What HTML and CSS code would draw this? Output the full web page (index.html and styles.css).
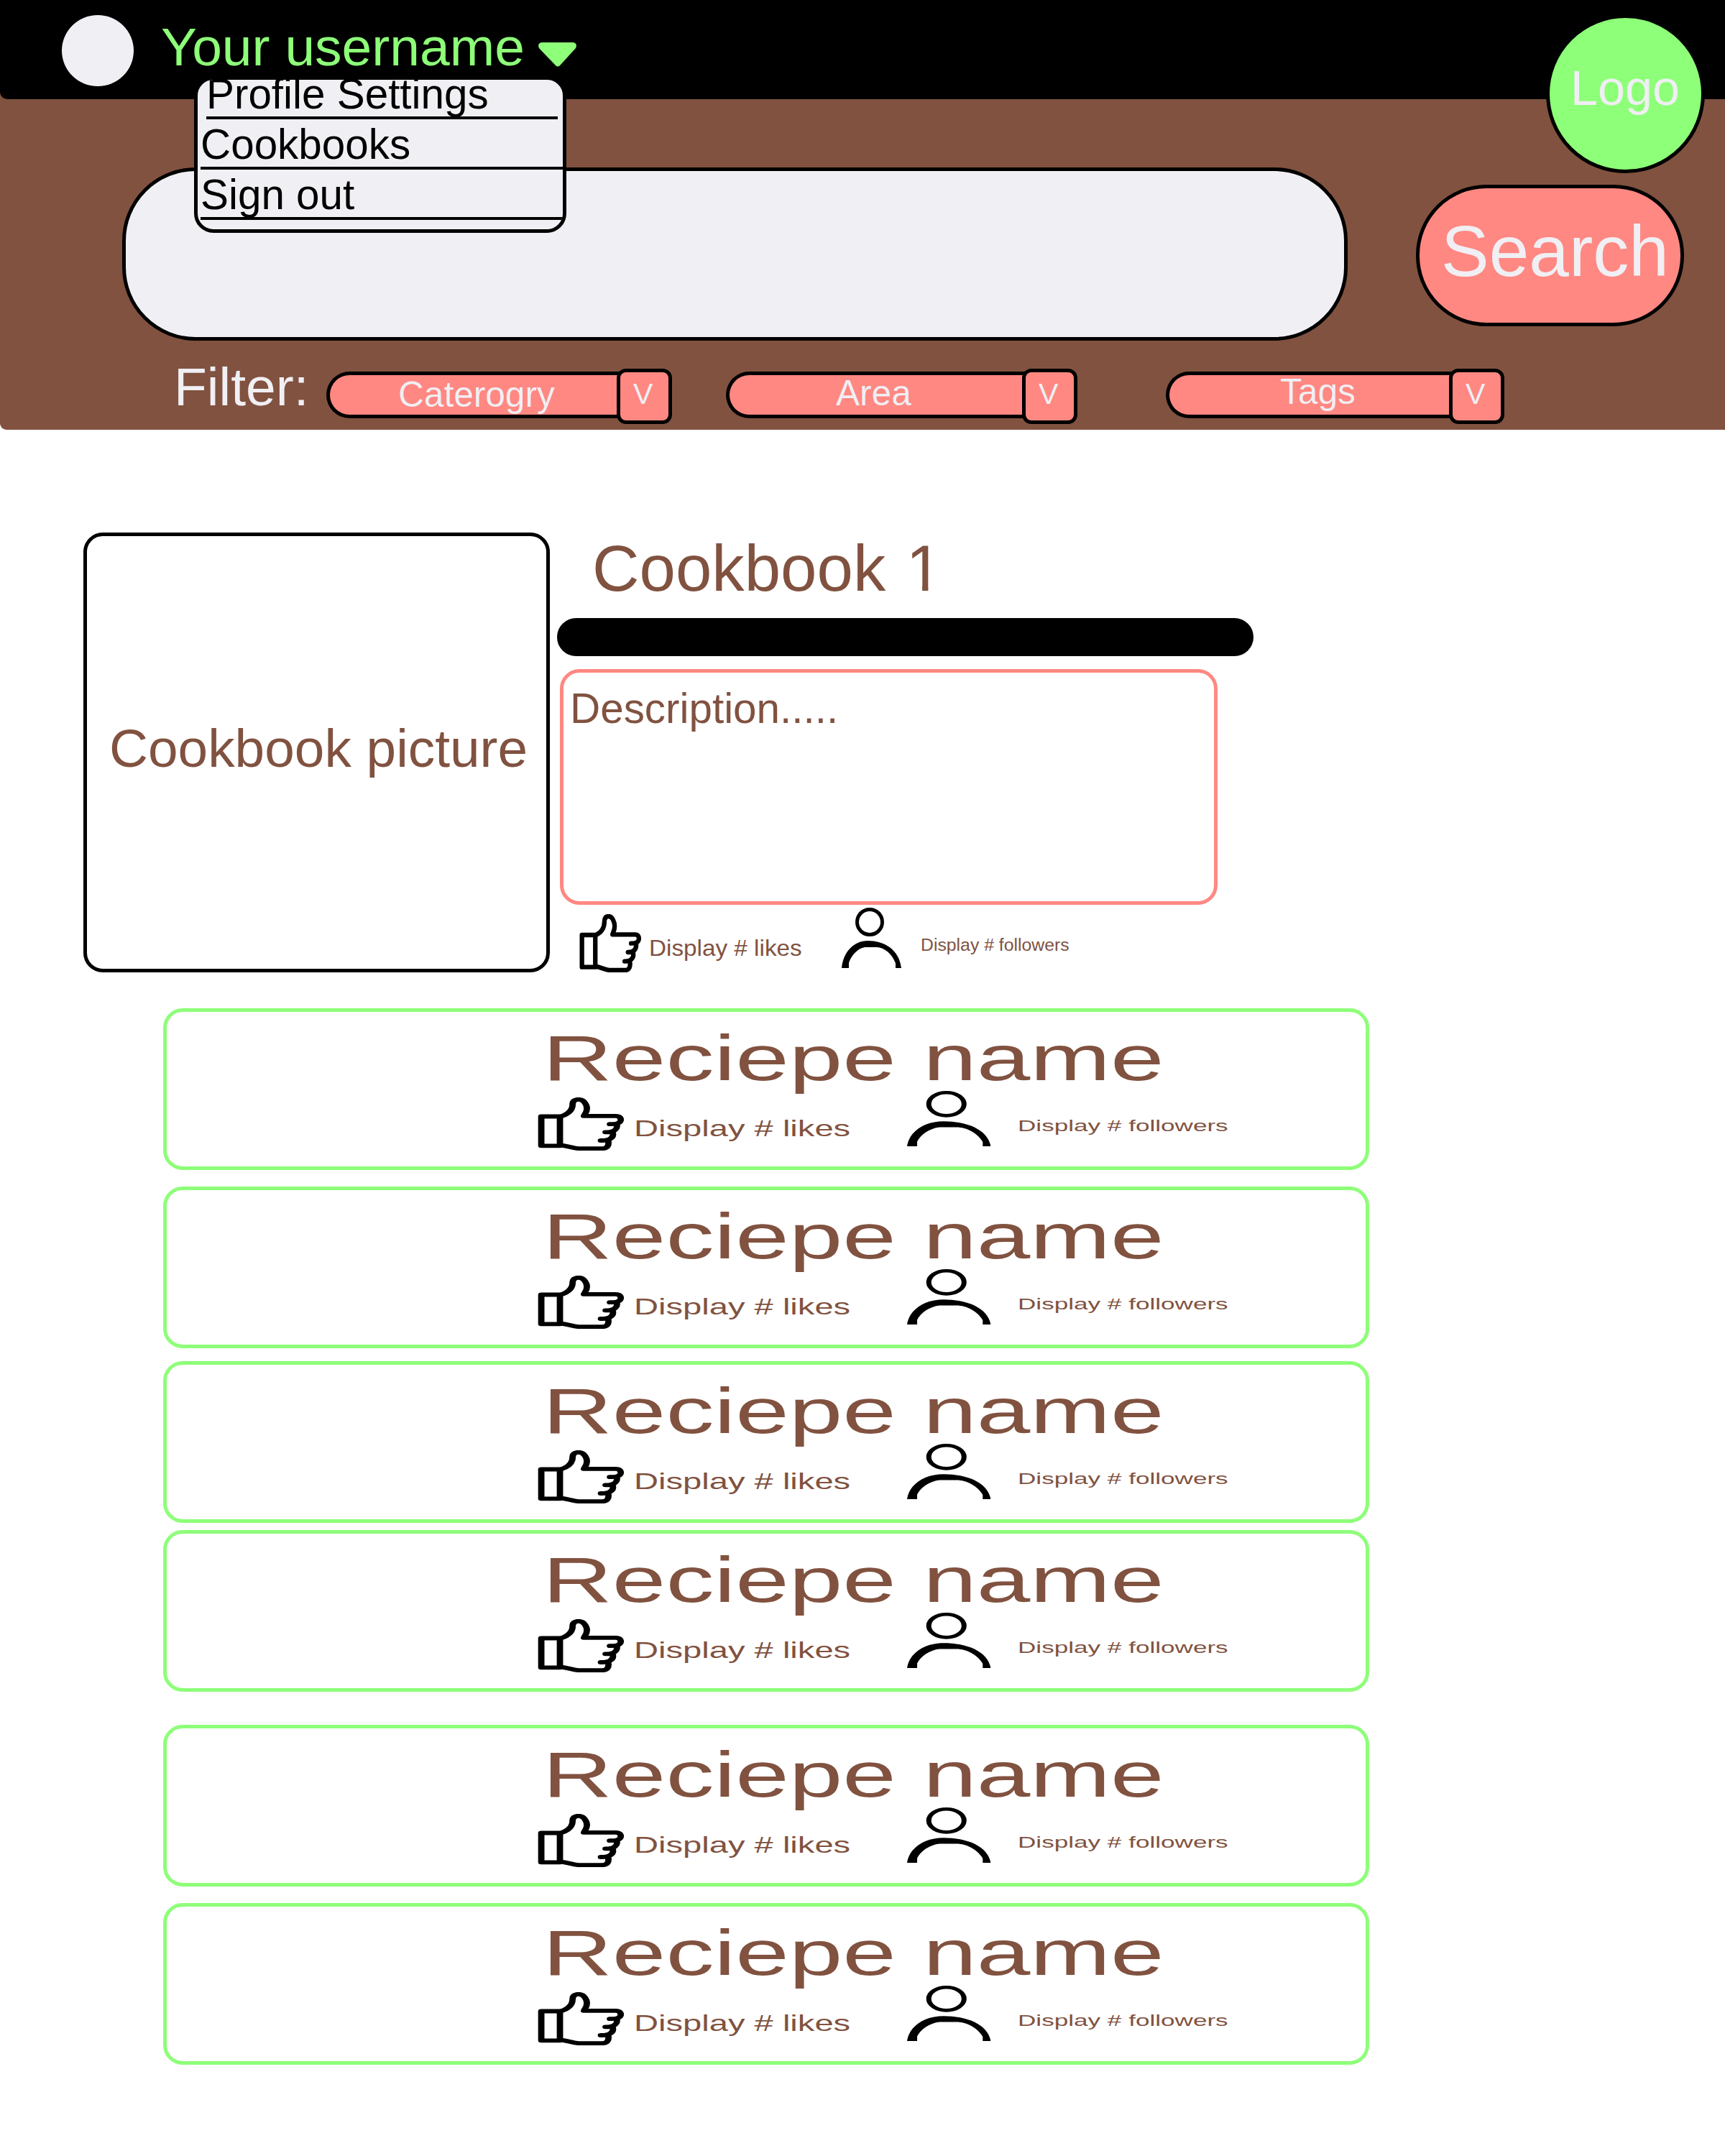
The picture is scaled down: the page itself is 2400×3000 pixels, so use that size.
FILE: index.html
```html
<!DOCTYPE html>
<html lang="en">
<head>
<meta charset="utf-8">
<title>Cookbook 1</title>
<link rel="stylesheet" href="styles.css">
</head>
<body>
<svg class="sprite" aria-hidden="true">
  <symbol id="thumb" viewBox="80 66 259 243" preserveAspectRatio="none">
    <g fill="none" stroke="#000" stroke-width="19" stroke-linecap="round" stroke-linejoin="round">
      <path d="M91 153H147V287H91Z"/>
      <path d="M150 153C172 142 185 124 185 98C185 82 192 75 203 75C219 75 228 100 228 117C228 134 221 142 219 151H314C328 151 331 163 329 173C326 186 314 188 297 188"/>
      <path d="M318 190C321 212 308 226 284 225"/>
      <path d="M306 228C309 248 298 264 270 263"/>
      <path d="M292 265C295 286 289 299 274 300H205C185 298 172 288 147 284"/>
    </g>
  </symbol>
  <symbol id="person" viewBox="93 39 249 252" preserveAspectRatio="none">
    <circle cx="210" cy="99" r="52.5" fill="none" stroke="#000" stroke-width="15"/>
    <path d="M93 291C100 222 145 177 202 177C268 177 333 212 342 291H318V271C304 232 270 204 240 204H190C160 208 132 240 123 270V291Z"/>
  </symbol>
</svg>

<div class="page">
  <header class="banner">
    <div class="topbar">
      <div class="avatar"></div>
      <span class="username">Your username</span>
      <svg class="caret" viewBox="0 0 53 34"><path d="M5 0H48Q55 1 52 8L31 31Q27 36 23 31L1 8Q-2 1 5 0Z"/></svg>
    </div>
    <div class="search-row">
      <div class="search-box"></div>
      <button class="search-button">Search</button>
    </div>
    <div class="filters">
      <span class="filters-label">Filter:</span>
      <div class="filter filter-category">
        <div class="filter-name"><span>Caterogry</span></div><div class="filter-toggle">V</div>
      </div>
      <div class="filter filter-area">
        <div class="filter-name"><span>Area</span></div><div class="filter-toggle">V</div>
      </div>
      <div class="filter filter-tags">
        <div class="filter-name"><span>Tags</span></div><div class="filter-toggle">V</div>
      </div>
    </div>
    <nav class="menu">
      <a class="menu-item menu-first">Profile Settings</a>
      <a class="menu-item">Cookbooks</a>
      <a class="menu-item">Sign out</a>
    </nav>
    <div class="logo">Logo</div>
  </header>

  <main>
    <section class="cookbook">
      <div class="picture">Cookbook picture</div>
      <div class="details">
        <h1>Cookbook <span class="numeral">1</span></h1>
        <div class="rule"></div>
        <div class="description">Description.....</div>
        <div class="stats">
          <svg class="icon-thumb"><use href="#thumb"/></svg>
          <span class="likes">Display # likes</span>
          <svg class="icon-person"><use href="#person"/></svg>
          <span class="followers">Display # followers</span>
        </div>
      </div>
    </section>

    <section class="recipes">
      <article class="recipe">
        <h2>Reciepe name</h2>
        <div class="stats">
          <svg class="icon-thumb"><use href="#thumb"/></svg><span class="likes">Display # likes</span>
          <svg class="icon-person"><use href="#person"/></svg><span class="followers">Display # followers</span>
        </div>
      </article>
      <article class="recipe">
        <h2>Reciepe name</h2>
        <div class="stats">
          <svg class="icon-thumb"><use href="#thumb"/></svg><span class="likes">Display # likes</span>
          <svg class="icon-person"><use href="#person"/></svg><span class="followers">Display # followers</span>
        </div>
      </article>
      <article class="recipe">
        <h2>Reciepe name</h2>
        <div class="stats">
          <svg class="icon-thumb"><use href="#thumb"/></svg><span class="likes">Display # likes</span>
          <svg class="icon-person"><use href="#person"/></svg><span class="followers">Display # followers</span>
        </div>
      </article>
      <article class="recipe">
        <h2>Reciepe name</h2>
        <div class="stats">
          <svg class="icon-thumb"><use href="#thumb"/></svg><span class="likes">Display # likes</span>
          <svg class="icon-person"><use href="#person"/></svg><span class="followers">Display # followers</span>
        </div>
      </article>
      <article class="recipe">
        <h2>Reciepe name</h2>
        <div class="stats">
          <svg class="icon-thumb"><use href="#thumb"/></svg><span class="likes">Display # likes</span>
          <svg class="icon-person"><use href="#person"/></svg><span class="followers">Display # followers</span>
        </div>
      </article>
      <article class="recipe">
        <h2>Reciepe name</h2>
        <div class="stats">
          <svg class="icon-thumb"><use href="#thumb"/></svg><span class="likes">Display # likes</span>
          <svg class="icon-person"><use href="#person"/></svg><span class="followers">Display # followers</span>
        </div>
      </article>
    </section>
  </main>
</div>
</body>
</html>
```
FILE: styles.css
```css
:root {
  --brown: #815240;
  --salmon: #ff8882;
  --green: #8dff78;
  --mist: #f0eff4;
}

* {
  box-sizing: border-box;
}

body {
  margin: 0;
  background: #fff;
  font-family: "Liberation Sans", Arial, sans-serif;
  line-height: 1;
  color: var(--brown);
}

h1,
h2 {
  margin: 0;
  font-weight: normal;
}

.sprite {
  position: absolute;
  width: 0;
  height: 0;
}

.page {
  width: 2400px;
  height: 3000px;
}

/* Header */

.banner {
  position: relative;
  height: 598px;
  background: var(--brown);
  border-bottom-left-radius: 9px;
}

.topbar {
  display: flex;
  align-items: flex-start;
  height: 138px;
  padding-left: 86px;
  background: #000;
  border-bottom-left-radius: 10px;
}

.avatar {
  width: 100px;
  height: 99px;
  margin-top: 21px;
  border-radius: 50%;
  background: var(--mist);
}

.username {
  width: 525px;
  margin: 28px 0 0 38px;
  font-size: 75px;
  white-space: nowrap;
  color: var(--green);
}

.caret {
  width: 53px;
  height: 34px;
  margin-top: 59px;
  fill: var(--green);
}

.logo {
  position: absolute;
  left: 2151px;
  top: 20px;
  width: 221px;
  height: 221px;
  padding: 63px 0 0 29px;
  border: 5px solid #000;
  border-radius: 50%;
  background: var(--green);
  color: var(--mist);
  font-size: 68.3px;
}

.menu {
  position: absolute;
  left: 270px;
  top: 106px;
  width: 518px;
  height: 218px;
  padding-left: 4px;
  border: 5px solid #000;
  border-radius: 27px;
  background: var(--mist);
  color: #000;
  font-size: 58.4px;
  overflow: hidden;
}

.menu-item {
  display: block;
  height: 70px;
  padding-top: 6px;
  border-bottom: 4px solid #000;
}

.menu-first {
  height: 55px;
  margin: 0 7px 0 8px;
  padding-top: 0;
  line-height: 40px;
}

.search-row {
  display: flex;
  align-items: flex-start;
  gap: 95px;
  height: 336px;
  padding: 95px 0 0 170px;
}

.search-box {
  width: 1705px;
  height: 241px;
  border: 5px solid #000;
  border-radius: 102px;
  background: var(--mist);
}

.search-button {
  width: 373px;
  height: 197px;
  margin-top: 24px;
  padding: 0 0 13px 30px;
  border: 5px solid #000;
  border-radius: 98px;
  background: var(--salmon);
  color: var(--mist);
  font: 100px/1 "Liberation Sans", Arial, sans-serif;
  text-align: left;
}

.filters {
  display: flex;
  align-items: flex-start;
  padding-left: 242px;
}

.filters-label {
  width: 212px;
  margin-top: 27px;
  font-size: 75px;
  color: var(--mist);
}

.filter {
  display: flex;
  align-items: flex-start;
  margin-top: 39px;
  color: var(--mist);
}

.filter-name {
  height: 65px;
  margin: 4px -12px 0 0;
  border: 5px solid #000;
  border-right: 0;
  border-radius: 33px 0 0 33px;
  background: var(--salmon);
  font-size: 49.6px;
}

.filter-name span {
  display: block;
}

.filter-toggle {
  z-index: 1;
  width: 77px;
  height: 77px;
  padding: 10px 0 0 18px;
  border: 5px solid #000;
  border-radius: 13px;
  background: var(--salmon);
  font-size: 41px;
}

.filter-category .filter-name {
  width: 416px;
  padding: 3px 0 0 95px;
}

.filter-area {
  margin-left: 75px;
}

.filter-area .filter-name {
  width: 424px;
  padding: 1px 0 0 148px;
}

.filter-tags {
  margin-left: 123px;
}

.filter-tags .filter-name {
  width: 406px;
  padding-left: 154px;
}

.filter-tags .filter-name span {
  margin-top: -1px;
}

/* Cookbook */

.cookbook {
  display: flex;
  gap: 10px;
  padding: 143px 0 0 116px;
  height: 805px;
}

.picture {
  width: 649px;
  height: 612px;
  padding: 258px 0 0 31px;
  border: 5px solid #000;
  border-radius: 27px;
  font-size: 74.8px;
  white-space: nowrap;
}

.details h1 {
  height: 119px;
  padding: 5px 0 0 49px;
  font-size: 90.67px;
}

/* A plain stem for the figure one, without its foot */
.numeral {
  display: inline-block;
  margin-left: 3px;
  clip-path: polygon(0 0, 1em 0, 1em 0.76em, 0.342em 0.76em, 0.342em 1em, 0.25em 1em, 0.25em 0.76em, 0 0.76em);
}

.rule {
  width: 969px;
  height: 53px;
  border-radius: 27px;
  background: #000;
}

.description {
  width: 915px;
  height: 328px;
  margin: 18px 0 0 4px;
  padding: 21px 0 0 9px;
  border: 5px solid var(--salmon);
  border-radius: 27px;
  font-size: 58.4px;
}

.stats {
  display: grid;
  align-items: start;
  white-space: nowrap;
}

.stats span {
  transform-origin: 0 0;
}

.stats svg {
  display: block;
}

.cookbook .stats {
  grid-template-columns: 97px 268px 110px 300px;
  padding-left: 31px;
}

.cookbook .icon-thumb {
  width: 86px;
  height: 81px;
  margin-top: 13px;
}

.cookbook .likes {
  margin-top: 44px;
  font-size: 32px;
  transform: scaleX(1.04);
}

.cookbook .icon-person {
  width: 83px;
  height: 84px;
  margin-top: 4px;
}

.cookbook .followers {
  margin-top: 44px;
  font-size: 24.8px;
}

/* Recipes */

.recipes {
  padding-left: 227px;
}

.recipe {
  width: 1678px;
  height: 225px;
  margin-bottom: 23px;
  padding: 19px 0 0 516px;
  border: 5px solid var(--green);
  border-radius: 27px;
}

.recipe:nth-child(2) {
  margin-bottom: 18px;
}

.recipe:nth-child(3) {
  margin-bottom: 10px;
}

.recipe:nth-child(4) {
  margin-bottom: 46px;
}

.recipe h2 {
  width: 600px;
  margin-left: 7px;
  font-size: 89.5px;
  line-height: 90px;
  white-space: nowrap;
  transform: scaleX(1.498);
  transform-origin: 0 0;
}

.recipe .stats {
  grid-template-columns: 134px 380px 154px 300px;
}

.recipe .icon-thumb {
  width: 120px;
  height: 74px;
  margin-top: 10px;
}

.recipe .likes {
  margin-top: 38px;
  font-size: 30.5px;
  transform: scaleX(1.545);
}

.recipe .icon-person {
  width: 116.5px;
  height: 77px;
  margin-top: 1px;
}

.recipe .followers {
  margin-top: 37.5px;
  font-size: 22.8px;
  transform: scaleX(1.54);
}
```
